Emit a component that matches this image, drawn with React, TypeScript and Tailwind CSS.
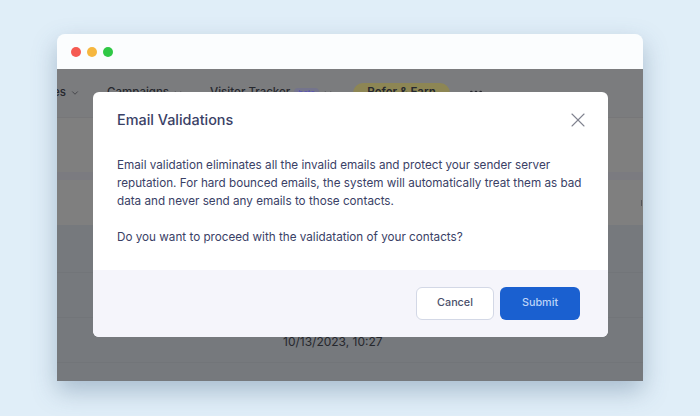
import { ChevronDown, Ellipsis, X } from 'lucide-react';

function NavItem({ label, beta, className }: { label: string; beta?: boolean; className?: string }) {
  return (
    <div className={`flex items-center gap-1 text-[11.5px] font-medium text-[#26282e] ${className ?? ''}`}>
      <span>{label}</span>
      {beta && <span className="rounded-sm bg-[#74748c] px-1 text-[8px] leading-[10px] text-[#5a55b0]">beta</span>}
      <ChevronDown size={10} strokeWidth={1.5} />
    </div>
  );
}

export default function App() {
  return (
    <div className="flex h-[416px] w-[700px] flex-col overflow-hidden bg-[#e0eef8] pl-[57px] pt-[34px] font-['Inter',sans-serif]">
      <div className="relative flex h-[347px] w-[586px] flex-col overflow-hidden rounded-t-lg shadow-[0_10px_24px_rgba(70,100,130,0.36)]">
        <div className="flex h-[35px] shrink-0 items-center gap-[6px] bg-[#fbfdfe] pl-[14px]">
          <span className="h-[10px] w-[10px] rounded-full bg-[#f55a52]" />
          <span className="h-[10px] w-[10px] rounded-full bg-[#f6b73f]" />
          <span className="h-[10px] w-[10px] rounded-full bg-[#2fc845]" />
        </div>

        {/* page behind the dimmed overlay */}
        <div className="flex flex-1 flex-col bg-[#76797d]">
          <div className="flex h-[49px] shrink-0 items-center border-b border-[#777779] bg-[#7b7c7e]">
            <div className="w-[50px]">
              <div className="ml-[-4px] flex items-center gap-1 text-[11.5px] font-medium text-[#26282e]">
                <span>es</span>
                <ChevronDown size={10} strokeWidth={1.5} />
              </div>
            </div>
            <NavItem label="Campaigns" className="w-[103px]" />
            <NavItem label="Visitor Tracker" beta className="w-[143px]" />
            <div className="flex h-[20px] w-[97px] items-center justify-center rounded-full bg-[#8d8654] text-[11.5px] font-semibold text-[#26282e]">
              Refer &amp; Earn
            </div>
            <Ellipsis size={16} className="mb-[3px] ml-[18px] text-[#26282e]" />
          </div>
          <div className="h-[54px] shrink-0 bg-[#7f7f7f]" />
          <div className="h-[8px] shrink-0 bg-[#7b7b80]" />
          <div className="flex h-[45px] shrink-0 items-center justify-end bg-[#7f7f7f]">
            <span className="mr-[1px] h-[6px] w-[1px] bg-[#55565a]" />
          </div>
          <div className="h-[48px] shrink-0 border-b border-[#727579]" />
          <div className="h-[45px] shrink-0 border-b border-[#727579]" />
          <div className="flex h-[45px] shrink-0 items-center border-b border-[#727579] pl-[226px] pt-[4px]">
            <span className="text-[12px] text-[#26282e]">10/13/2023, 10:27</span>
          </div>
        </div>

        {/* modal */}
        <div className="absolute left-[36px] top-[58px] flex h-[245px] w-[515px] flex-col overflow-hidden rounded-md bg-white">
          <div className="flex h-[178px] flex-col px-6 pt-[18px]">
            <div className="flex h-[20px] items-center justify-between">
              <h2 className="text-[14.4px] font-medium leading-[20px] text-[#3a4166]">Email Validations</h2>
              <X size={24} strokeWidth={1.1} className="mr-[-6px] text-[#80838f]" />
            </div>
            <p className="mt-[26px] text-[11.7px] leading-[18px] text-[#3a4166]">
              Email validation eliminates all the invalid emails and protect your sender server reputation. For hard
              bounced emails, the system will automatically treat them as bad data and never send any emails to those
              contacts.
            </p>
            <p className="mt-[18px] text-[11.7px] leading-[18px] text-[#3a4166]">
              Do you want to proceed with the validatation of your contacts?
            </p>
          </div>
          <div className="flex flex-1 items-start justify-end gap-[6px] bg-[#f5f5fb] pr-[28px] pt-[17px]">
            <button className="h-[33px] w-[78px] rounded-md border border-[#d3d8e6] bg-white text-[10.8px] font-medium text-[#4a4f6a]">
              Cancel
            </button>
            <button className="h-[33px] w-[80px] rounded-md bg-[#1a60d0] text-[10.8px] font-medium text-[#bcd4f8]">
              Submit
            </button>
          </div>
        </div>
      </div>
    </div>
  );
}
